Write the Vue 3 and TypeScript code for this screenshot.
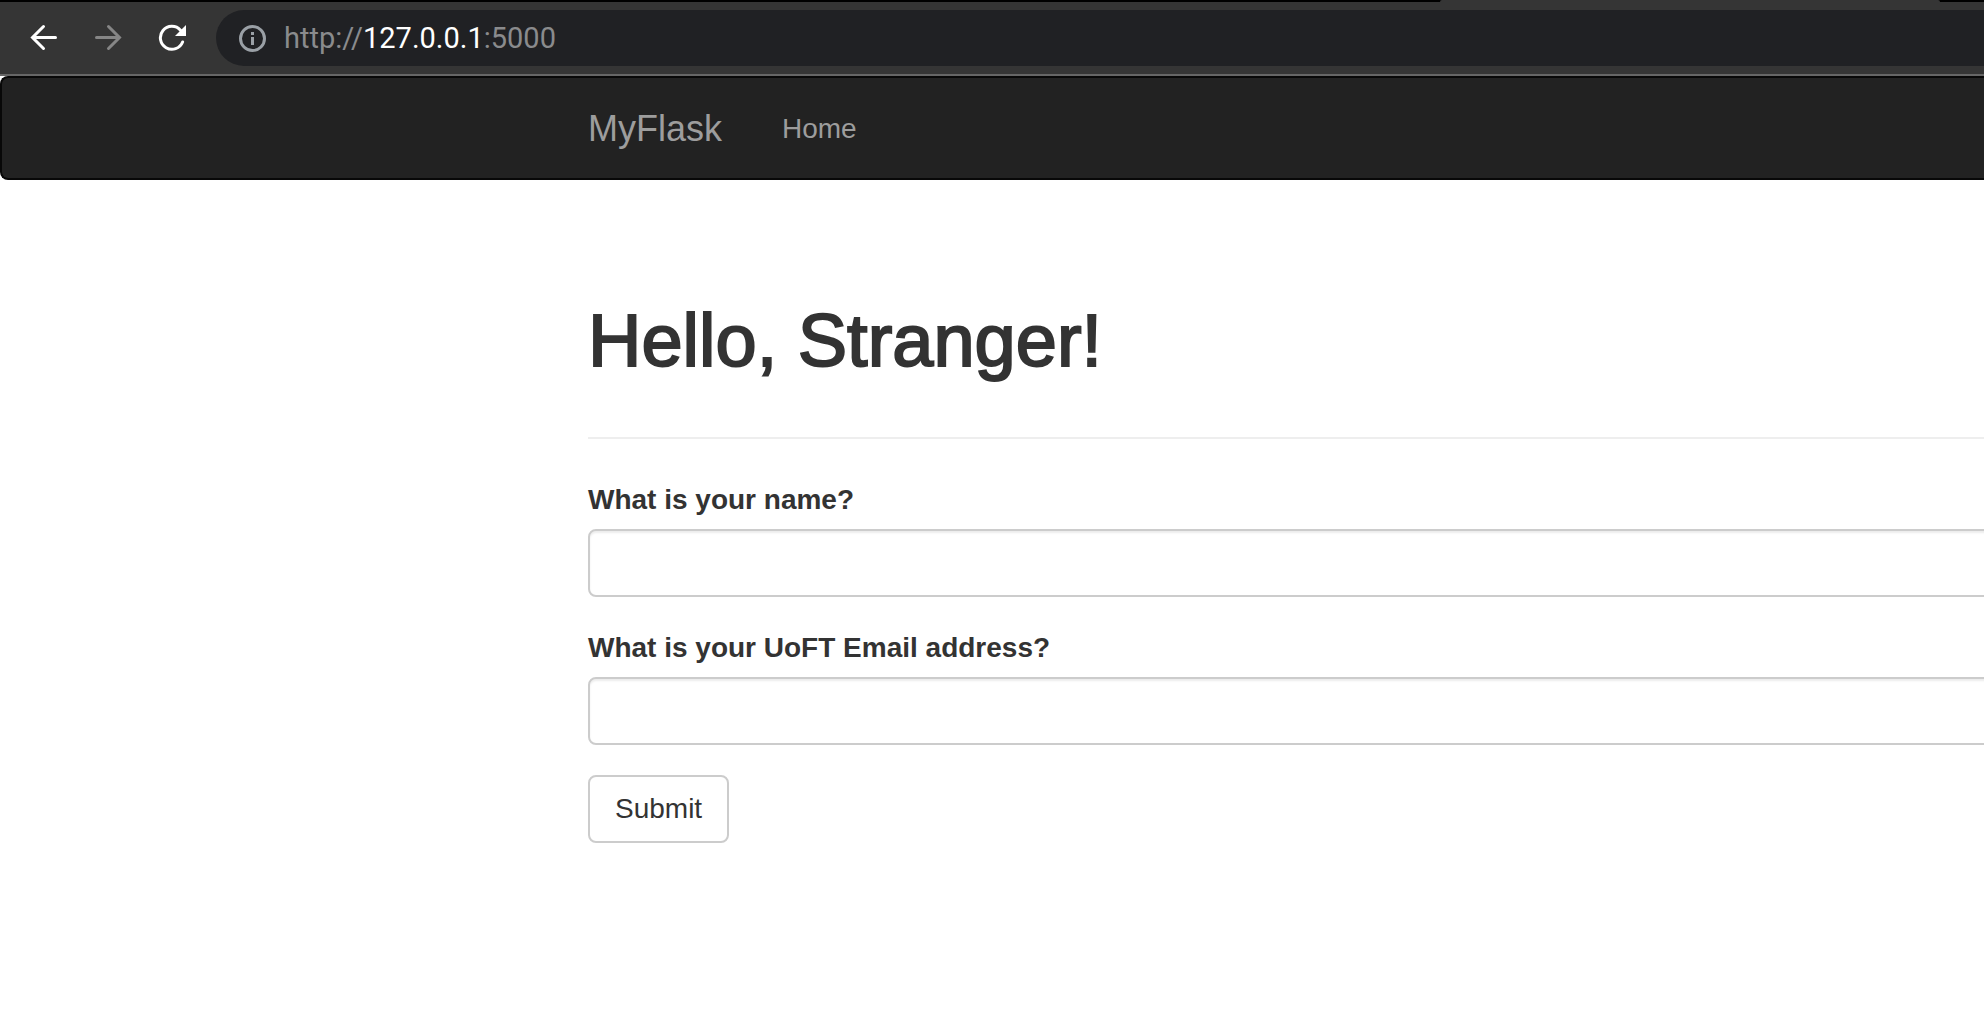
<script setup lang="ts">
import { reactive } from 'vue'

interface Field {
  id: 'name' | 'email'
  label: string
  type: string
}

const fields: Field[] = [
  { id: 'name', label: 'What is your name?', type: 'text' },
  { id: 'email', label: 'What is your UoFT Email address?', type: 'text' },
]

const form = reactive({ name: '', email: '' })
</script>

<template>
  <div class="window">
    <header class="browser">
      <div class="tabstrip"><span class="active-tab"></span></div>
      <div class="toolbar">
        <button class="tool" type="button" aria-label="Back">
          <svg viewBox="0 0 28 28" fill="none" stroke="#fff" stroke-width="3" stroke-linecap="round">
            <path d="M25.500 13.500H3M13.500 2.500L2.500 13.500L13.500 24.500" />
          </svg>
        </button>
        <button class="tool" type="button" aria-label="Forward">
          <svg viewBox="0 0 28 28" fill="none" stroke="#868686" stroke-width="3" stroke-linecap="round">
            <path d="M2.500 13.500H25M14.500 2.500L25.500 13.500L14.500 24.500" />
          </svg>
        </button>
        <button class="tool" type="button" aria-label="Reload">
          <svg viewBox="0 0 28 28" fill="none">
            <path d="M24.600 18A11.500 11.500 0 1 1 22.500 6.200" stroke="#fff" stroke-width="3" stroke-linecap="round" />
            <path d="M28 1V12H17Z" fill="#fff" />
          </svg>
        </button>
        <div class="omnibox">
          <svg class="info" viewBox="0 0 28 28" fill="none">
            <circle cx="14.500" cy="14.500" r="12" stroke="#9aa0a6" stroke-width="3" />
            <path d="M13 8h3v3h-3zM13 13h3v8h-3z" fill="#9aa0a6" />
          </svg>
          <div class="url" role="textbox" aria-label="Address" tabindex="0">http://<span class="host">127.0.0.1</span>:5000</div>
        </div>
      </div>
    </header>

    <nav class="navbar">
      <a class="brand" href="#">MyFlask</a>
      <a class="link" href="#">Home</a>
    </nav>

    <main class="container">
      <div class="page-header">
        <h1>Hello, Stranger!</h1>
      </div>
      <form @submit.prevent>
        <div v-for="field in fields" :key="field.id" class="group">
          <label :for="field.id">{{ field.label }}</label>
          <input :id="field.id" v-model="form[field.id]" :type="field.type" />
        </div>
        <button class="submit" type="submit">Submit</button>
      </form>
    </main>
  </div>
</template>

<style>
body {
  margin: 0;
  background: #fff;
}
</style>

<style scoped>
.window {
  overflow: hidden;
  color: #333;
  font-family: "Liberation Sans", Arial, sans-serif;
  font-size: 28px;
  line-height: 42px;
}

.browser {
  background: #353535;
  border-bottom: 2px solid #666;
}

.tabstrip {
  display: flex;
  justify-content: flex-end;
  height: 2px;
  padding-right: 44px;
  background: #000;
}

.active-tab {
  width: 500px;
  border-radius: 2px 2px 0 0;
  background: #353535;
}

.toolbar {
  display: flex;
  align-items: center;
  gap: 36px;
  height: 72px;
  padding-left: 30px;
}

.tool {
  width: 28px;
  height: 28px;
  padding: 0;
  border: 0;
  background: none;
}

.tool svg,
.info {
  display: block;
  flex: none;
  width: 28px;
  height: 28px;
}

.omnibox {
  display: flex;
  flex: 1;
  align-items: center;
  gap: 18px;
  height: 56px;
  margin-left: -6px;
  padding-left: 22px;
  border-radius: 28px 0 0 28px;
  background: #202124;
}

.url {
  color: #8a8b8d;
  font-family: Roboto, sans-serif;
  font-size: 29px;
}

.host {
  color: #fff;
}

.navbar {
  display: flex;
  align-items: center;
  gap: 60px;
  height: 98px;
  padding-top: 2px;
  padding-left: 586px;
  border: 2px solid #080808;
  border-right: 0;
  border-radius: 8px 0 0 8px;
  background: #222;
}

.navbar a {
  color: #9d9d9d;
  text-decoration: none;
}

.navbar .brand {
  font-size: 36px;
}

.container {
  padding-left: 588px;
}

.page-header {
  margin: 121px 0 40px;
  padding-bottom: 56px;
  border-bottom: 2px solid #eee;
}

/* The outline gives the regular face a medium weight. */
h1 {
  margin: 0;
  font-size: 74px;
  font-weight: 400;
  line-height: 80px;
  -webkit-text-stroke: 2px #333;
}

.group {
  margin-right: -8px;
  margin-bottom: 30px;
}

label {
  display: block;
  margin-bottom: 8px;
  font-weight: 700;
}

input {
  display: block;
  box-sizing: border-box;
  width: 100%;
  height: 68px;
  padding: 12px 24px;
  border: 2px solid #ccc;
  border-radius: 8px;
  background: #fff;
  box-shadow: inset 0 2px 2px rgba(0, 0, 0, 0.075);
  color: #555;
  font: inherit;
}

.submit {
  height: 68px;
  padding: 0 25px;
  border: 2px solid #ccc;
  border-radius: 8px;
  background: #fff;
  color: #333;
  font: inherit;
}
</style>
